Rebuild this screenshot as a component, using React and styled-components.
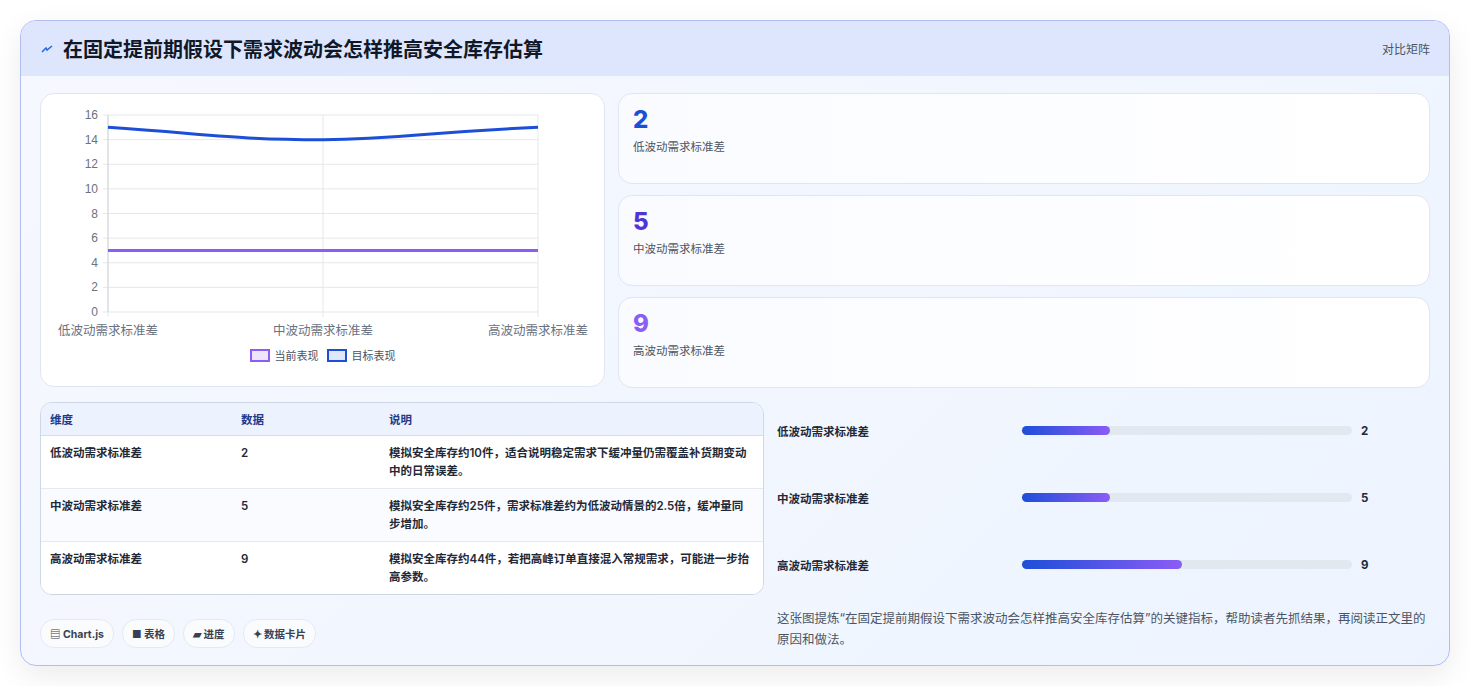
import React from 'react';
import styled, { createGlobalStyle } from 'styled-components';

const Global = createGlobalStyle`
  body { margin: 0; background: #fff; font-family: Inter, "Noto Sans CJK SC", sans-serif; }
`;

const Page = styled.div`
  padding: 20px 20px 20px 20px;
`;

const Card = styled.div`
  width: 1430px;
  height: 646px;
  box-sizing: border-box;
  border: 1px solid #b4bdf0;
  border-radius: 16px;
  background: linear-gradient(135deg, #f6f8fe, #edf4ff);
  box-shadow: 0 10px 30px rgba(0,0,0,0.08);
  overflow: hidden;
`;

const Header = styled.div`
  height: 55px;
  background: #dde6fd;
  display: flex;
  align-items: center;
  justify-content: space-between;
  padding: 0 19px 0 20px;
`;

const Title = styled.h1`
  margin: 0;
  font-size: 20px;
  font-weight: 700;
  color: #111827;
  display: flex;
  align-items: center;
  gap: 10px;
`;

const Tag = styled.span`
  font-size: 12px;
  color: #4b5563;
`;

const Body = styled.div`
  padding: 17px 19px 0 19px;
`;

const Top = styled.div`
  display: grid;
  grid-template-columns: 565px 1fr;
  gap: 13px;
`;

const Panel = styled.div`
  background: #fff;
  border: 1px solid #dfe5f2;
  border-radius: 14px;
`;

const ChartPanel = styled(Panel)`
  height: 294px;
  box-sizing: border-box;
  padding: 0;
`;

const Stats = styled.div`
  display: flex;
  flex-direction: column;
  gap: 11px;
`;

const Stat = styled(Panel)`
  height: 91px;
  box-sizing: border-box;
  padding: 12px 14px;
  background: linear-gradient(90deg, #f9fbff, #ffffff);
`;

const StatNum = styled.div`
  font-size: 24px;
  font-weight: 800;
  color: ${p => p.color};
  line-height: 28px;
`;

const StatLabel = styled.div`
  font-size: 11.5px;
  color: #4b5563;
  margin-top: 4px;
`;

const Bottom = styled.div`
  display: grid;
  grid-template-columns: 724px 1fr;
  gap: 13px;
  margin-top: 14px;
`;

const Table = styled.table`
  width: 100%;
  border-collapse: separate;
  border-spacing: 0;
  border: 1px solid #cfd6e4;
  border-radius: 12px;
  overflow: hidden;
  font-size: 11.5px;
  font-weight: 600;
  color: #1f2937;
  background: #fff;
  table-layout: fixed;
`;

const Th = styled.th`
  text-align: left;
  padding: 0 9px;
  height: 32px;
  background: #edf3fe;
  color: #1e3a8a;
  border-bottom: 1px solid #d6dce8;
  width: ${p => p.w || 'auto'};
`;

const Td = styled.td`
  padding: 8px 12px 8px 9px;
  vertical-align: top;
  line-height: 18px;
  background: ${p => p.alt ? '#f9fbff' : '#fff'};
  border-top: ${p => p.first ? 'none' : '1px solid #e5e9f1'};
  height: 36px;
`;

const Right = styled.div`
  display: flex;
  flex-direction: column;
`;

const BarRow = styled.div`
  display: grid;
  grid-template-columns: 245px 339px 1fr;
  align-items: center;
  height: 67px;
  font-size: 11.5px;
  font-weight: 600;
  color: #1f2937;
  &:first-child { margin-top: -5px; }
`;

const Track = styled.div`
  height: 9px;
  border-radius: 5px;
  background: #e2e8f0;
  margin-right: 9px;
`;

const Fill = styled.div`
  height: 100%;
  border-radius: 5px;
  background: linear-gradient(90deg, #1d4ed8, #8b5cf6);
`;

const Value = styled.span`
  font-weight: 700;
`;

const Note = styled.p`
  margin: 10px 0 0;
  font-size: 12.5px;
  line-height: 21px;
  color: #4b5563;
`;

const Pills = styled.div`
  display: flex;
  gap: 8px;
  margin-top: 24px;
`;

const Pill = styled.span`
  font-size: 10.5px;
  font-weight: 700;
  color: #374151;
  background: #fafbfd;
  border: 1px solid #e5e9f1;
  border-radius: 14px;
  padding: 6px 9px;
`;

const Legend = styled.div`
  display: flex;
  justify-content: center;
  gap: 8px;
  font-size: 11px;
  color: #4b5563;
  margin-top: 3px;
`;

const LegendItem = styled.span`
  display: flex;
  align-items: center;
  gap: 5px;
`;

const Swatch = styled.span`
  width: 16px;
  height: 9px;
  border: 2px solid ${p => p.c};
  background: ${p => p.bg};
`;

function Chart() {
  const x0 = 67, x1 = 497, yTop = 21, yBot = 218;
  const y = v => yBot - (v / 16) * (yBot - yTop);
  const ticks = [0, 2, 4, 6, 8, 10, 12, 14, 16];
  const xs = [x0, (x0 + x1) / 2, x1];
  const labels = ['低波动需求标准差', '中波动需求标准差', '高波动需求标准差'];
  return (
    <svg width="563" height="250" style={{ display: 'block' }}>
      {ticks.map(t => (
        <g key={t}>
          <line x1={x0 - 5} x2={x1} y1={y(t)} y2={y(t)} stroke="#e5e7eb" />
          <text x={x0 - 10} y={y(t) + 4} fontSize="12" fill="#6b7280" textAnchor="end" fontFamily="Liberation Sans, sans-serif">{t}</text>
        </g>
      ))}
      {xs.map((x, i) => (
        <g key={i}>
          <line x1={x} x2={x} y1={yTop} y2={yBot + 5} stroke="#e5e7eb" />
          <text x={x} y={yBot + 23} fontSize="12.5" fill="#6b7280" textAnchor="middle">{labels[i]}</text>
        </g>
      ))}
      <line x1={x0} x2={x0} y1={yTop} y2={yBot} stroke="#d1d5db" />
      <path d={`M${x0},${y(5)} L${x1},${y(5)}`} stroke="#8b5cf6" strokeWidth="3" fill="none" />
      <path d={`M${x0},${y(15)} C${x0 + 120},${y(14.3)} ${xs[1] - 80},${y(14)} ${xs[1]},${y(14)} S${x1 - 120},${y(14.6)} ${x1},${y(15)}`} stroke="#1d4ed8" strokeWidth="3" fill="none" />
    </svg>
  );
}

const rows = [
  ['低波动需求标准差', '2', '模拟安全库存约10件，适合说明稳定需求下缓冲量仍需覆盖补货期变动中的日常误差。'],
  ['中波动需求标准差', '5', '模拟安全库存约25件，需求标准差约为低波动情景的2.5倍，缓冲量同步增加。'],
  ['高波动需求标准差', '9', '模拟安全库存约44件，若把高峰订单直接混入常规需求，可能进一步抬高参数。'],
];

export default function App() {
  return (
    <Page>
      <Global />
      <Card>
        <Header>
          <Title>
            <svg width="12" height="10" viewBox="0 0 12 10"><path d="M1 8 L5 4 L6 6 L11 2" stroke="#2563eb" strokeWidth="1.5" fill="none" /></svg>
            在固定提前期假设下需求波动会怎样推高安全库存估算
          </Title>
          <Tag>对比矩阵</Tag>
        </Header>
        <Body>
          <Top>
            <ChartPanel>
              <Chart />
              <Legend>
                <LegendItem><Swatch c="#8b5cf6" bg="#ede5fe" />当前表现</LegendItem>
                <LegendItem><Swatch c="#1d4ed8" bg="#e0e7fb" />目标表现</LegendItem>
              </Legend>
            </ChartPanel>
            <Stats>
              <Stat><StatNum color="#1d4ed8">2</StatNum><StatLabel>低波动需求标准差</StatLabel></Stat>
              <Stat><StatNum color="#4f35d8">5</StatNum><StatLabel>中波动需求标准差</StatLabel></Stat>
              <Stat><StatNum color="#8b5cf6">9</StatNum><StatLabel>高波动需求标准差</StatLabel></Stat>
            </Stats>
          </Top>
          <Bottom>
            <div>
              <Table>
                <thead>
                  <tr><Th w="173px">维度</Th><Th w="130px">数据</Th><Th>说明</Th></tr>
                </thead>
                <tbody>
                  {rows.map((r, i) => (
                    <tr key={i}>
                      <Td first={i === 0} alt={i === 1}>{r[0]}</Td>
                      <Td first={i === 0} alt={i === 1}>{r[1]}</Td>
                      <Td first={i === 0} alt={i === 1}>{r[2]}</Td>
                    </tr>
                  ))}
                </tbody>
              </Table>
              <Pills>
                <Pill>▤ Chart.js</Pill>
                <Pill>■ 表格</Pill>
                <Pill>▰ 进度</Pill>
                <Pill>✦ 数据卡片</Pill>
              </Pills>
            </div>
            <Right>
              {[['低波动需求标准差', 2, 88], ['中波动需求标准差', 5, 88], ['高波动需求标准差', 9, 160]].map(([l, v, w]) => (
                <BarRow key={l}>
                  <span>{l}</span>
                  <Track><Fill style={{ width: w }} /></Track>
                  <Value>{v}</Value>
                </BarRow>
              ))}
              <Note>这张图提炼“在固定提前期假设下需求波动会怎样推高安全库存估算”的关键指标，帮助读者先抓结果，再阅读正文里的原因和做法。</Note>
            </Right>
          </Bottom>
        </Body>
      </Card>
    </Page>
  );
}
